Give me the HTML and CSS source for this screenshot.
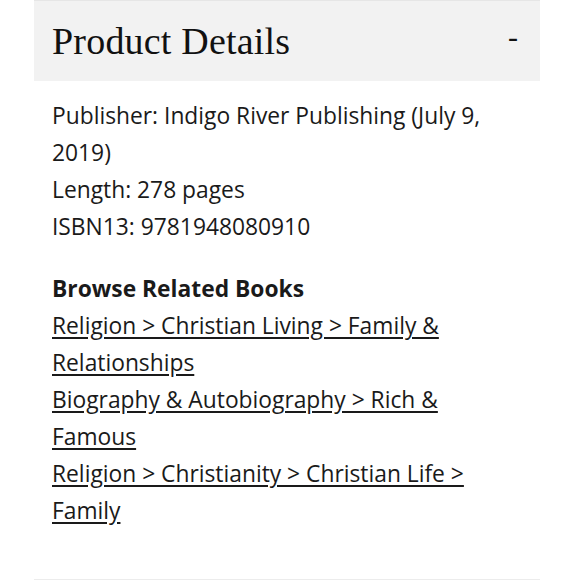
FILE: index.html
```html
<!DOCTYPE html>
<html>
<head>
<meta charset="utf-8">
<link rel="stylesheet" href="styles.css">
</head>
<body>
<section class="panel">
  <div class="panel-head">
    <h2 class="panel-title">Product Details</h2>
    <span class="toggle">-</span>
  </div>
  <div class="panel-body">
    <p class="meta">Publisher: Indigo River Publishing (July 9, 2019)<br>Length: 278 pages<br>ISBN13: 9781948080910</p>
    <h3 class="related-title">Browse Related Books</h3>
    <ul class="related">
      <li><a href="#">Religion &gt; Christian Living &gt; Family &amp; Relationships</a></li>
      <li><a href="#">Biography &amp; Autobiography &gt; Rich &amp; Famous</a></li>
      <li><a href="#">Religion &gt; Christianity &gt; Christian Life &gt; Family</a></li>
    </ul>
  </div>
</section>
</body>
</html>
```
FILE: styles.css
```css
html, body { margin: 0; padding: 0; background: #fff; }
body { font-family: "Open Sans", "Noto Sans", sans-serif; color: #1a1a1a; }
.panel {
  width: 506px;
  margin-left: 34px;
  border-top: 1px solid #e6e6e6;
  border-bottom: 2px solid #ececec;
}
.panel-head {
  background: #f2f2f2;
  height: 80px;
  display: flex;
  align-items: center;
  justify-content: space-between;
  padding: 0 22px 0 18px;
}
.panel-title {
  margin: 0;
  font-family: "Liberation Serif", serif;
  font-weight: 400;
  font-size: 38px;
  color: #111;
  letter-spacing: 0.2px;
}
.toggle { font-family: "Liberation Serif", serif; font-size: 30px; color: #111; margin-top: -8px; }
.panel-body { padding: 16px 50px 50px 18px; font-size: 22.8px; line-height: 37px; }
.meta { margin: 0; }
.related-title { margin: 25px 0 0 0; font-size: 22.8px; font-weight: 700; line-height: 37px; }
.related { list-style: none; margin: 0; padding: 0; }
.related a { color: #1a1a1a; text-decoration: underline; text-underline-offset: 3px; }
```
